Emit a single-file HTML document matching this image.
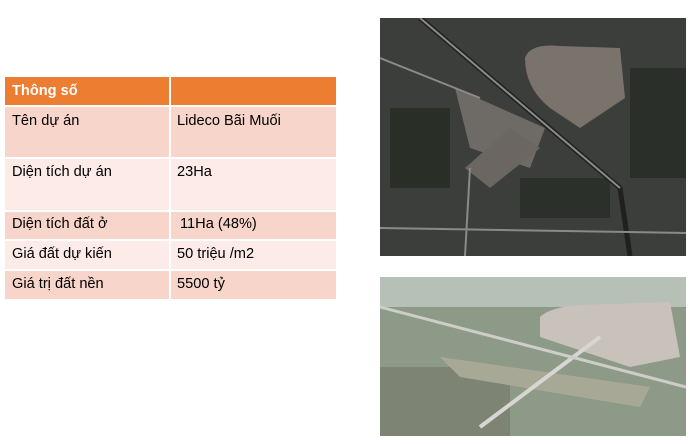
<!DOCTYPE html>
<html><head><meta charset="utf-8"><style>
body{margin:0;width:690px;height:444px;background:#fff;position:relative;overflow:hidden;font-family:"Liberation Sans",sans-serif}
.c{position:absolute;font-size:14.6px;color:#000}
.r{position:absolute;left:5px;width:331px}
.r div{position:absolute;top:0;bottom:0}
</style></head><body>
<div class="r" style="top:77px;height:28px"><div style="left:0;width:164px;background:#ed7d31"></div><div style="left:166px;width:165px;background:#ed7d31"></div></div>
<div class="r" style="top:107px;height:50px"><div style="left:0;width:164px;background:#f8d5cb"></div><div style="left:166px;width:165px;background:#f8d5cb"></div></div>
<div class="r" style="top:159px;height:51px"><div style="left:0;width:164px;background:#fcebe7"></div><div style="left:166px;width:165px;background:#fcebe7"></div></div>
<div class="r" style="top:212px;height:27px"><div style="left:0;width:164px;background:#f8d5cb"></div><div style="left:166px;width:165px;background:#f8d5cb"></div></div>
<div class="r" style="top:241px;height:28px"><div style="left:0;width:164px;background:#fcebe7"></div><div style="left:166px;width:165px;background:#fcebe7"></div></div>
<div class="r" style="top:271px;height:28px"><div style="left:0;width:164px;background:#f8d5cb"></div><div style="left:166px;width:165px;background:#f8d5cb"></div></div>
<div class="c" style="left:12px;top:83px;color:#fff;font-weight:bold">Thông số</div>
<div class="c" style="left:12px;top:113px">Tên dự án</div><div class="c" style="left:177px;top:113px">Lideco Bãi Muối</div>
<div class="c" style="left:12px;top:164px">Diện tích dự án</div><div class="c" style="left:177px;top:164px">23Ha</div>
<div class="c" style="left:12px;top:216px">Diện tích đất ở</div><div class="c" style="left:180px;top:216px">11Ha (48%)</div>
<div class="c" style="left:12px;top:246px">Giá đất dự kiến</div><div class="c" style="left:177px;top:246px">50 triệu /m2</div>
<div class="c" style="left:12px;top:276px">Giá trị đất nền</div><div class="c" style="left:177px;top:276px">5500 tỷ</div>
<svg style="position:absolute;left:380px;top:18px" width="306" height="238">
<rect width="306" height="238" fill="#3b3e3a"/>
<rect x="10" y="90" width="60" height="80" fill="#22281f" opacity=".7"/>
<rect x="140" y="160" width="90" height="40" fill="#22281f" opacity=".6"/>
<rect x="250" y="50" width="56" height="110" fill="#242a22" opacity=".7"/>
<path d="M145 40 Q150 25 180 28 L240 30 L245 80 L200 110 L170 90 Q145 70 145 40Z" fill="#7a736c"/>
<path d="M75 70 L165 110 L150 150 L90 130 Z" fill="#6e6a66"/>
<path d="M85 150 L130 110 L160 130 L110 170 Z" fill="#6b6662"/>
<path d="M40 0 L240 170 L250 238" stroke="#202020" stroke-width="5" fill="none"/>
<path d="M40 0 L240 170" stroke="#8a8a88" stroke-width="2" fill="none"/>
<path d="M0 210 L306 215 M90 150 L85 238 M0 40 L100 80" stroke="#8a8a88" stroke-width="2" fill="none"/>
</svg>
<svg style="position:absolute;left:380px;top:277px" width="306" height="159">
<rect width="306" height="159" fill="#8e9a88"/>
<rect width="306" height="30" fill="#b7c0b6"/>
<rect x="0" y="90" width="130" height="69" fill="#7d8473"/>
<path d="M160 40 Q170 30 200 28 L290 25 L300 80 L250 90 L160 60Z" fill="#c8c2bb"/>
<path d="M60 80 L270 110 L260 130 L80 100Z" fill="#a7a996"/>
<path d="M100 150 L220 60" stroke="#d8d6d2" stroke-width="4"/>
<path d="M0 30 L306 110" stroke="#cfcdc8" stroke-width="3"/>
</svg>
</body></html>
